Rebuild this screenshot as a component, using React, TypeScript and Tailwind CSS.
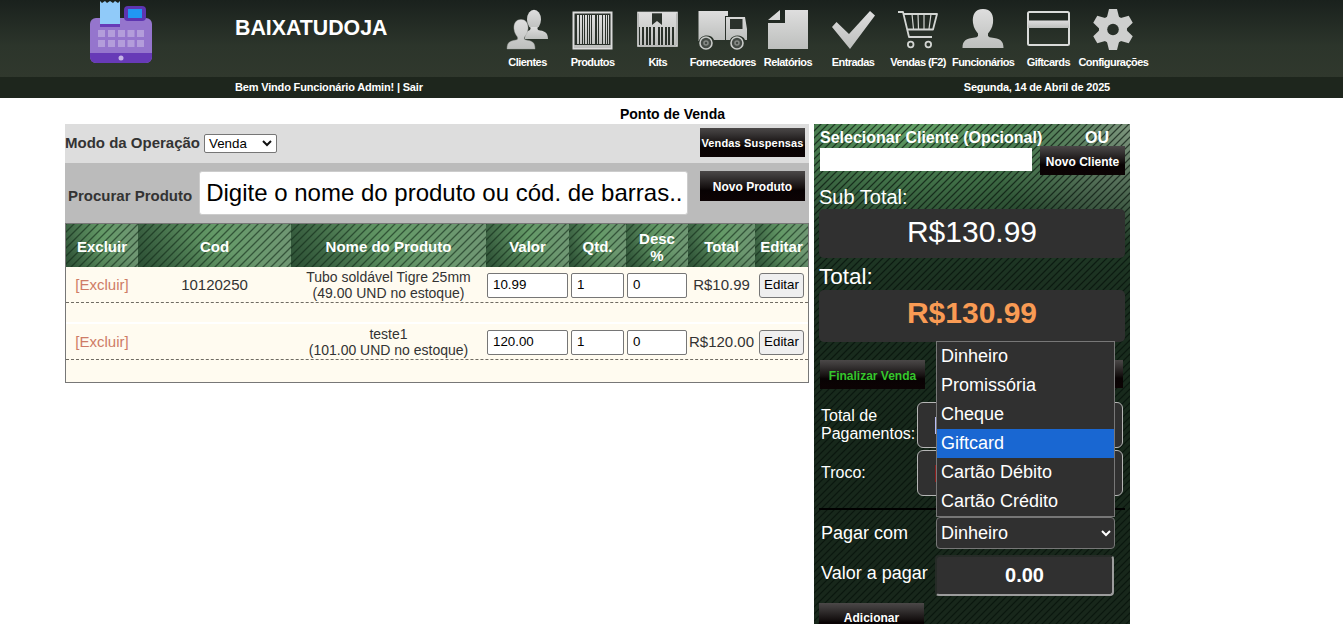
import React, { memo } from 'react';

interface MenuEntry {
  label: string;
  icon: React.ReactNode;
}

interface CartItem {
  id: number;
  code: string;
  name: string;
  stock: string;
  price: string;
  total: string;
}

const metal = 'url(#metal)';

const menu: MenuEntry[] = [
  {
    label: 'Clientes',
    icon: (
      <g fill={metal}>
        <ellipse cx="27" cy="10.500" rx="7" ry="9.800" />
        <path d="M24 18h6l1 3c6 1 10 2 10 9H18c0-6 2-8 5-9z" />
        <g stroke="#9fa29f" strokeWidth=".4">
          <path d="M14 10.500c5 0 7.500 4 7 9.500-.5 4-2 6-3.500 8-.5 2 0 3 1.500 3 6 1 9 2 9 9H0c0-7 3-8 9-9 1.500 0 2-1 1.500-3C9 26 7.500 24 7 20c-.5-5.500 2-9.500 7-9.500z" />
        </g>
      </g>
    ),
  },
  {
    label: 'Produtos',
    icon: (
      <>
        <rect x="1.500" y="3.500" width="38" height="36" fill="#2a312b" stroke="#dcdcdc" strokeWidth="2" />
        <path d="M5 6h2v29H5zM8 6h2v29H8zM11 6h1v29h-1zM13 6h2v29h-2zM16 6h1v29h-1zM18 6h1v29h-1zM20 6h3v29h-3zM25 6h1v29h-1zM27 6h3v29h-3zM31 6h2v29h-2zM34 6h1v29h-1zM36 6h1v29h-1zM2 36h37v3H2z" fill={metal} />
      </>
    ),
  },
  {
    label: 'Kits',
    icon: (
      <>
        <rect x="1" y="3.500" width="39" height="33.500" fill="#2a312b" stroke="#dcdcdc" strokeWidth="1.600" />
        <path d="M2 4h13v12l5-4 5 4V4h14v14H2zM3 18h2v18H3zM7 18h2v18H7zM11 18h1v18h-1zM14 18h2v18h-2zM18 18h3v18h-3zM23 18h1v18h-1zM26 18h2v18h-2zM30 18h1v18h-1zM33 18h2v18h-2zM37 18h2v18h-2z" fill={metal} />
      </>
    ),
  },
  {
    label: 'Fornecedores',
    icon: (
      <>
        <path d="M-3.500 2H26v5h-3v24H12c-2-6-13-6-15 1h-.5zM24 8h19l2 12v11h-2c-2-6-13-6-15 0h-4z" fill={metal} />
        <path d="M23.500 7.500v23" stroke="#2a312b" strokeWidth="1" />
        <path d="M28 10h12.500v10H28z" fill="#2a312b" />
        <g fill="#454b46" stroke="#c9cbc9" strokeWidth="1.600">
          <circle cx="4" cy="34" r="6" />
          <circle cx="35" cy="34" r="6" />
          <circle cx="4" cy="34" r="2" stroke="#858985" />
          <circle cx="35" cy="34" r="2" stroke="#858985" />
        </g>
      </>
    ),
  },
  {
    label: 'Relatórios',
    icon: <path d="M18 1h23v39H1V14h17zM1 11 13 1v10z" fill={metal} />,
  },
  {
    label: 'Entradas',
    icon: <path d="m-1 18 4.500-5L16 25 37 2l5 4.500L17 40z" fill={metal} />,
  },
  {
    label: 'Vendas (F2)',
    icon: (
      <g fill="none" stroke="#d3d6d3" strokeWidth="1.800">
        <path d="M0 3h5l6 25h23M6 5h33l-4 15.500H9" strokeLinejoin="round" />
        <path d="M14 5l1.500 15M20 5l.5 15M26 5v15M33 5l-2 15" strokeWidth="1.200" />
        <circle cx="12.700" cy="35.500" r="2.800" />
        <circle cx="30.300" cy="35.500" r="2.800" />
      </g>
    ),
  },
  {
    label: 'Funcionários',
    icon: <path d="M20 0c8 0 11 6 10 14-.7 5-3 8-5 10.500V27c1 1 2 1.500 3 1.500 9 1 12.500 3 12.500 10.500h-41C-.5 31.500 3 29.500 12 28.500c1 0 2-.5 3-1.500v-2.500C13 22 10.700 19 10 14 9 6 12 0 20 0z" fill={metal} />,
  },
  {
    label: 'Giftcards',
    icon: (
      <>
        <rect x="0" y="3" width="41" height="33" rx="1.500" fill="none" stroke="#d9dbd9" strokeWidth="2" />
        <path d="M0 11.500h41V19H0z" fill={metal} />
      </>
    ),
  },
  {
    label: 'Configurações',
    icon: (
      <g fill="#cecfce">
        <circle cx="20" cy="20.500" r="14" />
        <path d="M16 0h8l2 8v25l-2 8h-8l-2-8V8z" />
        <path d="M16 0h8l2 8v25l-2 8h-8l-2-8V8z" transform="rotate(60 20 20.500)" />
        <path d="M16 0h8l2 8v25l-2 8h-8l-2-8V8z" transform="rotate(120 20 20.500)" />
        <circle cx="20" cy="20.500" r="5.800" fill="#272f28" />
      </g>
    ),
  },
];

const items: CartItem[] = [
  { id: 1, code: '10120250', name: 'Tubo soldável Tigre 25mm', stock: '(49.00 UND no estoque)', price: '10.99', total: 'R$10.99' },
  { id: 2, code: '', name: 'teste1', stock: '(101.00 UND no estoque)', price: '120.00', total: 'R$120.00' },
];

const payments = ['Dinheiro', 'Promissória', 'Cheque', 'Giftcard', 'Cartão Débito', 'Cartão Crédito'];

const columns = ['Excluir', 'Cod', 'Nome do Produto', 'Valor', 'Qtd.', 'Desc %', 'Total', 'Editar'];

const grid = 'grid grid-cols-[72px_153px_195px_83px_57px_62px_67px_53px]';

const glossy =
  'flex items-center justify-center whitespace-nowrap font-bold bg-[linear-gradient(#4b4848_0%,#383535_20%,#151010_55%,#080203_65%,#0c0304_100%)]';

const striped =
  'bg-[linear-gradient(135deg,rgba(15,40,22,0.6)_0%,transparent_11%,transparent_39%,rgba(15,40,22,0.6)_50%,transparent_61%,transparent_89%,rgba(15,40,22,0.6)_100%),linear-gradient(20deg,rgba(20,50,30,0.4)_0%,transparent_50%),linear-gradient(90deg,#3c6343_0%,#649a67_50%,#6f9673_100%)] bg-[length:8px_8px,auto,auto]';

const field = 'border border-[#767676] rounded-[2px] bg-white h-[25px] px-[5px] text-[13.333px] text-black flex items-center';

const Chevron = ({ color }: { color: string }) => (
  <svg width="10" height="7" viewBox="0 0 10 7" fill="none" stroke={color} strokeWidth="2">
    <path d="m1 1 4 4 4-4" />
  </svg>
);

const RegisterLogo = () => (
  <svg width="64" height="64" viewBox="0 0 64 64">
    <rect x="1" y="17" width="62" height="45" rx="6" fill="#9575cd" />
    <path d="M1 52h62v4a6 6 0 0 1-6 6H7a6 6 0 0 1-6-6z" fill="#673ab7" />
    <rect x="35" y="5" width="22" height="15" rx="4" fill="#5e35b1" />
    <rect x="39" y="8" width="14" height="9" fill="#2196f3" />
    <path d="M11 23h20v3H11z" fill="#673ab7" />
    <path d="M11 0l2 2 3-2 2 2 3-2 3 2 2-2 3 2 2-2v23H11z" fill="#90caf9" />
    <path
      d="M9 29h7v7H9zM19 29h7v7h-7zM29 29h7v7h-7zM38.500 29h7v7h-7zM48 29h7v7h-7zM9 39h7v7H9zM19 39h7v7h-7zM29 39h7v7h-7zM38.500 39h7v7h-7zM48 39h7v7h-7z"
      fill="#b39ddb"
    />
    <circle cx="32" cy="57" r="2.500" fill="#c5b3e6" />
  </svg>
);

const Header = () => (
  <header className="text-white">
    <div className="h-[77px] flex bg-[linear-gradient(#1a211d,#2c352b_60%,#30382d)]">
      <div className="w-[235px] pl-[89px] pt-px">
        <RegisterLogo />
      </div>
      <h1 className="w-[260px] pt-[12px] text-[21.33px] leading-[32px] font-bold">BAIXATUDOJA</h1>
      <nav className="flex pt-[9px]">
        {menu.map((entry) => (
          <a key={entry.label} className="w-[65.1px] flex flex-col items-center">
            <svg width="41" height="41" viewBox="0 0 41 41" className="overflow-visible">
              {entry.icon}
            </svg>
            <span className="mt-[5px] text-[11px] leading-[14px] font-bold tracking-[-0.55px] whitespace-nowrap">{entry.label}</span>
          </a>
        ))}
      </nav>
    </div>
    <div className="h-[21px] pl-[235px] pr-[233px] flex items-center justify-between bg-[#1e261d] text-[11px] font-bold">
      <span className="tracking-[-0.17px]">Bem Vindo Funcionário Admin! | Sair</span>
      <span className="tracking-[-0.2px]">Segunda, 14 de Abril de 2025</span>
    </div>
  </header>
);

const CartRow = memo(({ item }: { item: CartItem }) => (
  <div className={grid + ' h-[36px] pt-px bg-[#fffbf0] items-center text-center text-[15px] text-[#333] border-b border-dashed border-[#6f6b62]'}>
    <span className="pt-px text-[#ce7c66]">[Excluir]</span>
    <span className="pt-px">{item.code}</span>
    <span className="text-[14px] leading-[16px]">
      {item.name}
      <br />
      {item.stock}
    </span>
    <span className="px-px"><span className={field}>{item.price}</span></span>
    <span className="px-[2px]"><span className={field}>1</span></span>
    <span className="px-px"><span className={field}>0</span></span>
    <span className="pt-px whitespace-nowrap">{item.total}</span>
    <span className="px-[4px]">
      <button className="block w-[45px] h-[25px] border border-[#767676] rounded-[3px] bg-[#efefef] text-[13.333px] text-black">Editar</button>
    </span>
  </div>
));

const Products = () => (
  <section className="w-[744px]">
    <div className="h-[39px] bg-[#ddd] flex items-center pr-[4px] text-[15px] font-bold text-[#333]">
      <span>Modo da Operação</span>
      <div className="ml-[4px] w-[73px] h-[19px] pl-[4px] pr-[4px] flex items-center justify-between bg-white border border-[#767676] rounded-[2px] text-[13.333px] font-normal text-black">
        Venda
        <Chevron color="#111" />
      </div>
      <button className={glossy + ' ml-auto mb-[2px] w-[105px] h-[29px] pt-px text-[11px] tracking-[0.16px] text-white'}>Vendas Suspensas</button>
    </div>
    <div className="h-[60px] bg-[#bbb] flex pl-[3px] pr-[4px] pt-[8px]">
      <span className="pt-[14px] leading-[22px] text-[15px] font-bold text-[#333]">Procurar Produto</span>
      <div className="ml-[7px] w-[489px] h-[44px] rounded-[3px] border border-[#ccc] bg-white pl-[6px] text-[24px] leading-[42px] text-black whitespace-nowrap">
        Digite o nome do produto ou cód. de barras..
      </div>
      <button className={glossy + ' ml-auto w-[105px] h-[30px] pt-[2px] text-[12px] text-white'}>Novo Produto</button>
    </div>
    <div className="border border-[#777] bg-white">
      <div className={grid + ' h-[43px] text-white text-[15px] leading-[17px] font-bold text-center'}>
        {columns.map((name) => (
          <div key={name} className={striped + ' flex items-center justify-center px-2 pt-[2px]'}>
            {name}
          </div>
        ))}
      </div>
      <CartRow item={items[0]} />
      <div className="h-[19px] bg-[#fffbf0]" />
      <div className="h-[2px]" />
      <CartRow item={items[1]} />
      <div className="h-[22px] bg-[#fffbf0]" />
    </div>
  </section>
);

const Checkout = () => (
  <aside className="ml-[5px] w-[316px] h-[500px] overflow-hidden px-[5px] text-white bg-[linear-gradient(135deg,rgba(4,14,8,0.65)_0%,transparent_12%,transparent_38%,rgba(4,14,8,0.65)_50%,transparent_62%,transparent_88%,rgba(4,14,8,0.65)_100%),radial-gradient(ellipse_230px_130px_at_100px_-15px,#6fae70_0%,rgba(82,140,88,0.75)_45%,transparent_100%),radial-gradient(ellipse_150px_120px_at_316px_0px,#819681_0%,transparent_100%),linear-gradient(#2f5438_0%,#23402a_17%,#1a2e1f_35%,#17281b_60%,#18271b_100%)] bg-[length:7px_7px,auto,auto,auto]">
    <div className="h-[85px]">
      <div className="flex h-[24px] items-center pt-[3px] pl-px text-[16px] font-bold">
        <span className="w-[265px]">Selecionar Cliente (Opcional)</span>
        <span>OU</span>
      </div>
      <div className="flex justify-between pl-px">
        <div className="w-[212px] h-[23px] bg-white" />
        <button className={glossy + ' -mt-[2px] w-[85px] h-[29px] pt-[2px] text-[12px]'}>Novo Cliente</button>
      </div>
      <div className="mt-[10px] text-[20px] leading-[24px]">Sub Total:</div>
    </div>
    <div className="h-[49px] rounded-[5px] bg-[#303030] text-center text-[30px] leading-[45px]">R$130.99</div>
    <div className="h-[32px] pt-[5px] text-[22.500px] leading-[28px]">Total:</div>
    <div className="h-[52px] rounded-[5px] bg-[#303030] text-center text-[30px] leading-[45px] font-bold text-[#f99b54]">R$130.99</div>
    <div className="flex justify-between mt-[18px] pl-px pr-[2px]">
      <button className={glossy + ' w-[105px] h-[29px] pt-[2px] text-[12px] text-[#35c62c]'}>Finalizar Venda</button>
      <span className={glossy + ' w-[105px] h-[28px]'} />
    </div>
    <div className="mt-[13px] flex items-center text-[16px] leading-[18px] pl-[2px]">
      <span className="w-[96px]">Total de Pagamentos:</span>
      <div className="w-[206px] h-[46px] shrink-0 rounded-[6px] border border-[#b5b5b5] bg-[#303030] pl-[17px] flex items-center">
        <span className="w-[2px] h-[17px] bg-[#b9bdf5]" />
      </div>
    </div>
    <div className="mt-[2px] flex items-center text-[16px] leading-[18px] pl-[2px]">
      <span className="w-[96px]">Troco:</span>
      <div className="w-[206px] h-[46px] shrink-0 rounded-[6px] border border-[#b5b5b5] bg-[#303030] pl-[17px] flex items-center">
        <span className="w-[2px] h-[17px] bg-[#8c1c1c]" />
      </div>
    </div>
    <hr className="mt-[12px] border-0 h-[2px] bg-black" />
    <div className="mt-[7px] flex items-center text-[18px] pl-[2px]">
      <span className="w-[115px]">Pagar com</span>
      <div className="relative w-[179px] h-[32px]">
        <div className="h-full flex items-center justify-between pl-[4px] pr-[3px] rounded-[4px] border border-[#777] bg-[#303030]">
          Dinheiro
          <Chevron color="#fff" />
        </div>
        <ul className="absolute left-0 bottom-full w-[179px] border border-[#777] bg-[#303030]">
          {payments.map((name) => (
            <li key={name} className={name === 'Giftcard' ? 'h-[29px] pl-[4px] leading-[28px] bg-[#1967d2]' : 'h-[29px] pl-[4px] leading-[28px]'}>
              {name}
            </li>
          ))}
        </ul>
      </div>
    </div>
    <div className="mt-[6px] flex items-center text-[18px] pl-[2px]">
      <span className="w-[114px] pb-[5px] whitespace-nowrap">Valor a pagar</span>
      <div className="w-[179px] h-[41px] rounded-[4px] border-2 border-t-[#262b27] border-l-[#262b27] border-r-[#9c9c9c] border-b-[#9c9c9c] bg-[#303030] text-center text-[20px] leading-[37px] font-bold">
        0.00
      </div>
    </div>
    <button className={glossy + ' mt-[7px] w-[105px] h-[30px] text-[12px]'}>Adicionar</button>
  </aside>
);

const App: React.FC = () => {
  return (
    <div className="h-[624px] overflow-hidden bg-white font-['Liberation_Sans',Arial,sans-serif]">
      <svg width="0" height="0" className="absolute">
        <defs>
          <linearGradient id="metal" x1="0" y1="0" x2="0" y2="1">
            <stop offset="0" stopColor="#dedede" />
            <stop offset="1" stopColor="#bdbfbd" />
          </linearGradient>
        </defs>
      </svg>
      <Header />
      <h2 className="h-[26px] pt-[6px] pl-[2px] text-center text-[14px] leading-[20px] font-bold text-black">Ponto de Venda</h2>
      <main className="flex items-start pl-[65px]">
        <Products />
        <Checkout />
      </main>
    </div>
  );
};

export default App;
